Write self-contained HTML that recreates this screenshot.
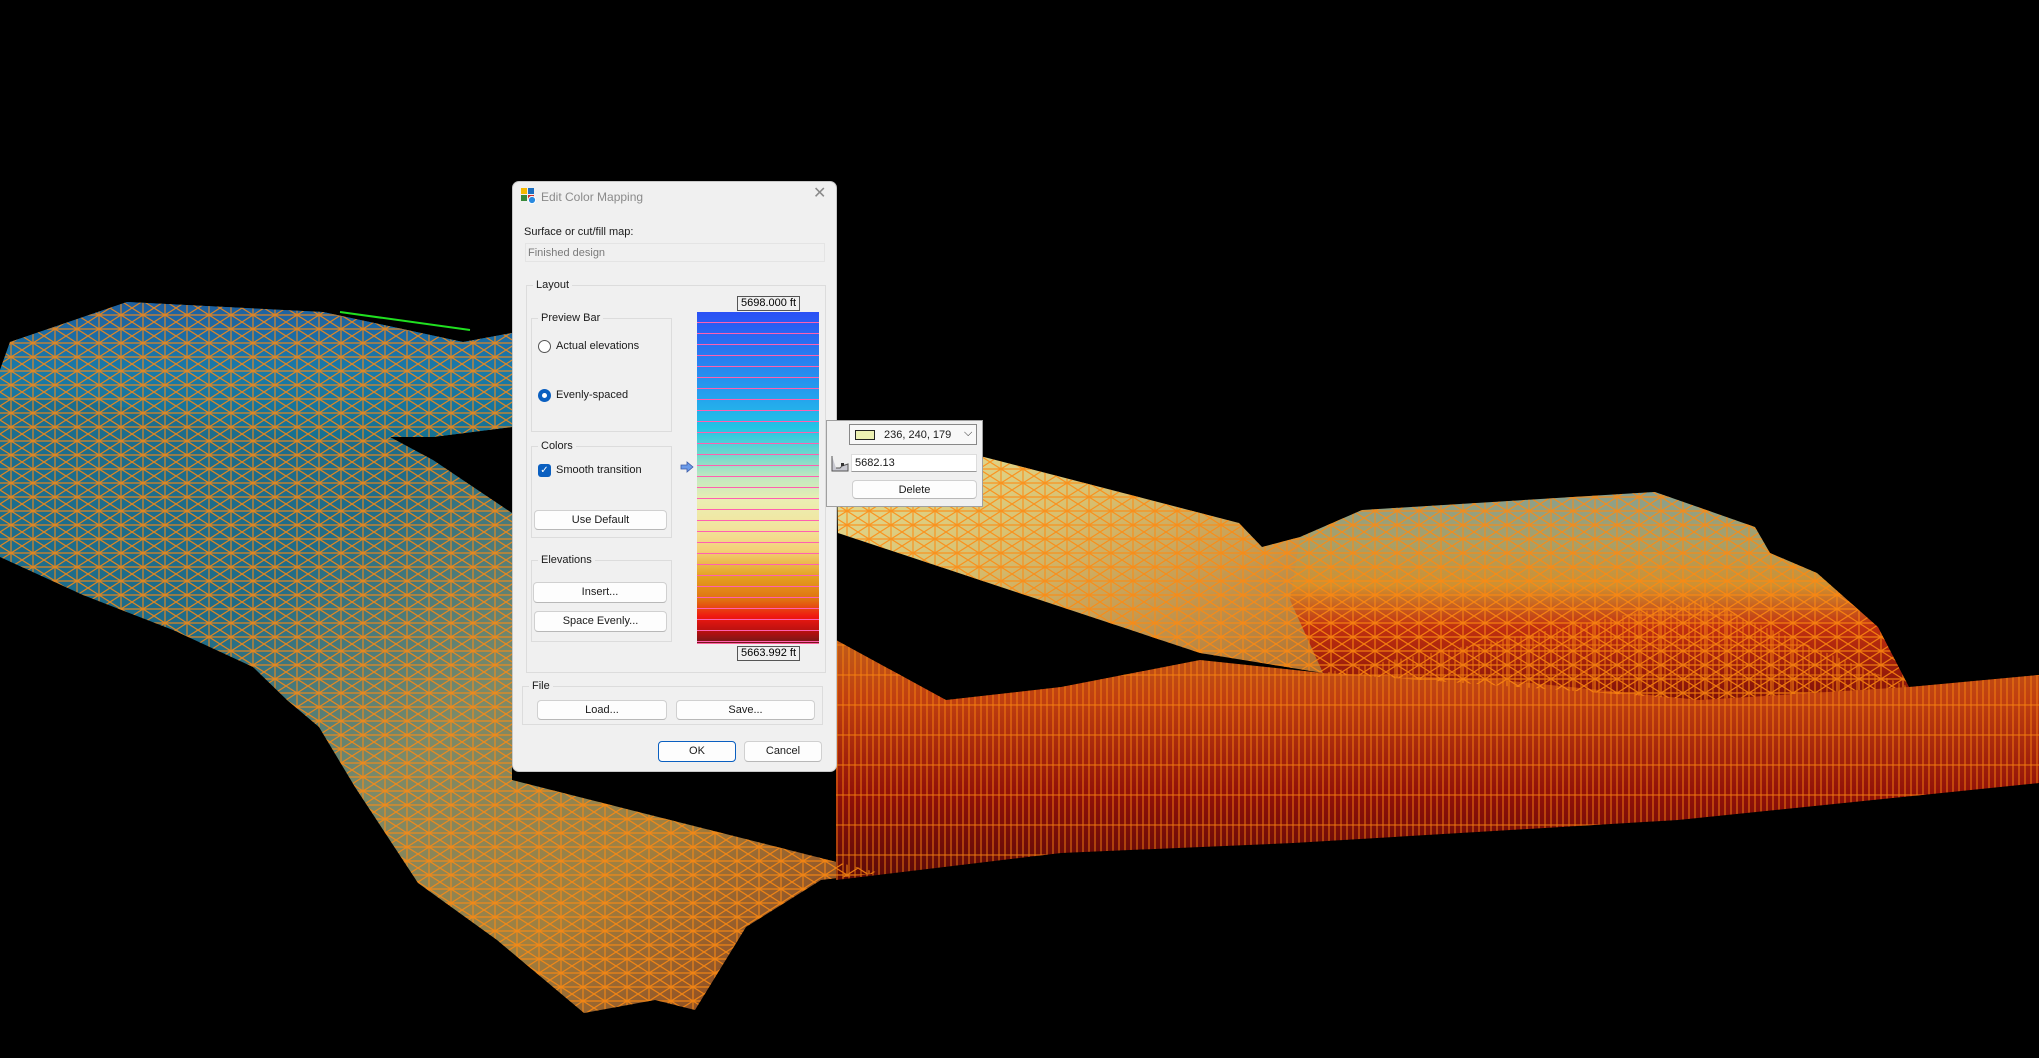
<!DOCTYPE html>
<html><head><meta charset="utf-8"><style>
*{margin:0;padding:0;box-sizing:border-box}
html,body{width:2039px;height:1058px;background:#000;overflow:hidden;font-family:"Liberation Sans",sans-serif;}
svg.bg{position:absolute;left:0;top:0}
.a{position:absolute}
.dlg{position:absolute;left:512px;top:181px;width:325px;height:591px;background:#f0f0f0;border:1px solid #c8c8c8;border-radius:7px;}
.t{position:absolute;font-size:11px;color:#1a1a1a;white-space:nowrap;line-height:14px}
.grp{position:absolute;border:1px solid #dcdcdc;}
.gl{position:absolute;top:-8px;left:6px;background:#f0f0f0;padding:0 3px;font-size:11px;color:#1a1a1a;line-height:14px}
.btn{position:absolute;background:#fdfdfd;border:1px solid #d0d0d0;border-bottom-color:#b8b8b8;border-radius:4px;font-size:11px;color:#1a1a1a;text-align:center;line-height:18px}
</style></head><body>
<svg class="bg" width="2039" height="1058" viewBox="0 0 2039 1058">
<defs>
<linearGradient id="gBlue" x1="0" y1="0" x2="0" y2="1">
<stop offset="0" stop-color="#1f5fa0"/><stop offset=".5" stop-color="#1a7aa8"/><stop offset="1" stop-color="#167090"/></linearGradient>
<linearGradient id="gLeft" x1="0" y1="0" x2="1" y2="1">
<stop offset="0" stop-color="#1a6e90"/><stop offset=".35" stop-color="#206c88"/><stop offset=".55" stop-color="#7a8a6a"/><stop offset=".75" stop-color="#a08040"/><stop offset="1" stop-color="#8a3010"/></linearGradient>
<linearGradient id="gLow" x1="0" y1="0" x2="0" y2="1">
<stop offset="0" stop-color="#c07020"/><stop offset=".35" stop-color="#c04010"/><stop offset=".7" stop-color="#901008"/><stop offset="1" stop-color="#5a0a08"/></linearGradient>
<linearGradient id="gRoad" x1="0" y1="0" x2="1" y2="1">
<stop offset="0" stop-color="#e8e8a0"/><stop offset=".4" stop-color="#d8c070"/><stop offset="1" stop-color="#b07030"/></linearGradient>
<linearGradient id="gPlat" x1="0" y1="0" x2="0" y2="1">
<stop offset="0" stop-color="#88a090"/><stop offset=".25" stop-color="#a8a068"/><stop offset=".45" stop-color="#d09030"/><stop offset=".65" stop-color="#c03010"/><stop offset="1" stop-color="#801008"/></linearGradient>
<pattern id="mesh" width="22" height="14" patternUnits="userSpaceOnUse">
<path d="M0 0L22 14M22 0L0 14M0 7H22M11 0V14" stroke="#ff8a10" stroke-width="1.2" fill="none"/></pattern>
<pattern id="mesh2" width="6" height="30" patternUnits="userSpaceOnUse">
<path d="M3 0V30M0 15H6" stroke="#ff8a10" stroke-width="1" fill="none"/></pattern>
</defs>
<path d="M10 342L127 302L323 312L463 342L512 333L512 427L433 437L390 437L433 460L512 513L512 780L880 873L821 880L746 927L695 1010L655 1000L584 1013L497 940L418 883L355 787L319 727L287 700L253 667L173 630L83 595L0 557L0 370Z" fill="url(#gLeft)"/>
<path d="M10 342L127 302L323 312L463 342L512 333L512 427L433 437L390 437L300 440L200 420L80 400L0 400L0 370Z" fill="url(#gBlue)"/>
<path d="M836 640L946 700L1061 687L1200 660L1323 673L1500 640L1700 600L1909 687L2039 675L2039 783L1678 820L1293 843L1061 853L861 877L836 880Z" fill="url(#gLow)"/>
<path d="M836 430L984 457L1239 523L1262 547L1300 537L1323 600L1323 673L1200 653L838 533Z" fill="url(#gRoad)"/>
<path d="M1300 537L1362 510L1655 492L1755 527L1770 553L1817 573L1878 627L1909 687L1700 700L1500 680L1323 673L1290 600Z" fill="url(#gPlat)"/>
<g opacity=".85">
<path d="M10 342L127 302L323 312L463 342L512 333L512 427L433 437L390 437L433 460L512 513L512 780L880 873L821 880L746 927L695 1010L655 1000L584 1013L497 940L418 883L355 787L319 727L287 700L253 667L173 630L83 595L0 557L0 370Z" fill="url(#mesh)"/>
<path d="M836 640L946 700L1061 687L1200 660L1323 673L1500 640L1700 600L1909 687L2039 675L2039 783L1678 820L1293 843L1061 853L861 877L836 880Z" fill="url(#mesh2)"/>
<path d="M836 430L984 457L1239 523L1262 547L1300 537L1362 510L1655 492L1755 527L1770 553L1817 573L1878 627L1909 687L1700 700L1323 673L1200 653L838 533Z" fill="url(#mesh)"/>
</g>
<path d="M340 312L470 330" stroke="#20e020" stroke-width="2"/>
</svg>

<div class="dlg">
 <svg class="a" style="left:8px;top:6px" width="15" height="16" viewBox="0 0 15 16"><rect x="0" y="0" width="6" height="6" fill="#f5b800"/><rect x="7" y="0" width="6" height="6" fill="#1d6fc0"/><rect x="0" y="7" width="6" height="6" fill="#3a8a3a"/><rect x="7" y="7" width="6" height="6" fill="#d02828"/><circle cx="11" cy="12" r="3.6" fill="#2a8ae0" stroke="#fff" stroke-width="1"/></svg>
 <div class="t" style="left:28px;top:8px;font-size:12px;color:#8a8a8a">Edit Color Mapping</div>
 <div class="t" style="left:300px;top:5px;font-size:16px;color:#8a8a8a;font-weight:300">✕</div>
 <div class="t" style="left:11px;top:43px">Surface or cut/fill map:</div>
 <div class="a" style="left:12px;top:61px;width:300px;height:19px;border:1px solid #e4e4e4;background:#f0f0f0"></div>
 <div class="t" style="left:15px;top:64px;color:#7a7a7a">Finished design</div>

 <div class="grp" style="left:13px;top:103px;width:300px;height:388px"><div class="gl">Layout</div></div>
 <div class="grp" style="left:18px;top:136px;width:141px;height:114px"><div class="gl">Preview Bar</div></div>
 <div class="a" style="left:25px;top:158px;width:13px;height:13px;border:1px solid #555;border-radius:50%;background:#fff"></div>
 <div class="t" style="left:43px;top:157px">Actual elevations</div>
 <div class="a" style="left:25px;top:207px;width:13px;height:13px;border-radius:50%;background:#0a5fc0"><div class="a" style="left:4px;top:4px;width:5px;height:5px;border-radius:50%;background:#fff"></div></div>
 <div class="t" style="left:43px;top:206px">Evenly-spaced</div>

 <div class="grp" style="left:18px;top:264px;width:141px;height:92px"><div class="gl">Colors</div></div>
 <div class="a" style="left:25px;top:282px;width:13px;height:13px;border-radius:3px;background:#0a5fc0;color:#fff;font-size:10px;line-height:13px;text-align:center">✓</div>
 <div class="t" style="left:43px;top:281px">Smooth transition</div>
 <div class="btn" style="left:21px;top:328px;width:133px;height:20px">Use Default</div>

 <div class="grp" style="left:18px;top:378px;width:141px;height:82px"><div class="gl">Elevations</div></div>
 <div class="btn" style="left:20px;top:400px;width:134px;height:21px">Insert...</div>
 <div class="btn" style="left:21px;top:429px;width:133px;height:21px">Space Evenly...</div>

 <svg class="a" style="left:167px;top:279px" width="14" height="12" viewBox="0 0 14 12"><path d="M1 4H7V1L13 6L7 11V8H1Z" fill="#6a9ae8" stroke="#3a5aa8" stroke-width=".8"/></svg>

 <div class="a" style="left:184px;top:130px;width:122px;height:332px;border-bottom:1px solid #ff60a0;
 background:linear-gradient(#2a50f5 0%,#2878f0 12%,#25a0ee 25%,#22c4e6 35%,#70d8cc 43%,#c2e8c0 50%,#ebefb2 57%,#f2e49e 65%,#f4d078 72%,#e4a020 80%,#e07010 87%,#f01810 92%,#b01010 97%,#701818 100%)"></div>
 <div class="a" style="left:184px;top:130px;width:122px;height:332px;background:repeating-linear-gradient(to bottom,transparent 0,transparent 10px,#ff60b0 10px,#ff60b0 11px)"></div>
 <div class="a" style="left:224px;top:114px;width:63px;height:15px;border:1px solid #555;background:#f0f0f0;font-size:11px;line-height:13px;text-align:center">5698.000 ft</div>
 <div class="a" style="left:224px;top:464px;width:63px;height:15px;border:1px solid #555;background:#f0f0f0;font-size:11px;line-height:13px;text-align:center">5663.992 ft</div>

 <div class="grp" style="left:9px;top:504px;width:301px;height:39px"><div class="gl">File</div></div>
 <div class="btn" style="left:24px;top:518px;width:130px;height:20px">Load...</div>
 <div class="btn" style="left:163px;top:518px;width:139px;height:20px">Save...</div>
 <div class="btn" style="left:145px;top:559px;width:78px;height:21px;border:1px solid #0a5fc0">OK</div>
 <div class="btn" style="left:231px;top:559px;width:78px;height:21px">Cancel</div>
</div>

<div class="a" style="left:826px;top:420px;width:157px;height:87px;background:#f0f0f0;border:1px solid #a0a0a0">
 <div class="a" style="left:22px;top:3px;width:128px;height:21px;border:1px solid #888;background:#f8f8f8"></div>
 <div class="a" style="left:28px;top:9px;width:20px;height:10px;border:1px solid #222;background:#ecf0b3"></div>
 <div class="t" style="left:57px;top:7px">236, 240, 179</div>
 <div class="t" style="left:137px;top:5px;font-size:11px">⌵</div>
 <svg class="a" style="left:4px;top:34px" width="18" height="17" viewBox="0 0 18 17"><path d="M1 1V16H17V9L11 11L9 13H5" fill="#c8c8d0" stroke="#555" stroke-width="1"/><rect x="10" y="8" width="3" height="3" fill="#333"/></svg>
 <div class="a" style="left:24px;top:33px;width:126px;height:18px;border:1px solid #ddd;border-bottom-color:#999;background:#fff"></div>
 <div class="t" style="left:28px;top:35px">5682.13</div>
 <div class="btn" style="left:25px;top:59px;width:125px;height:19px">Delete</div>
</div>
</body></html>
